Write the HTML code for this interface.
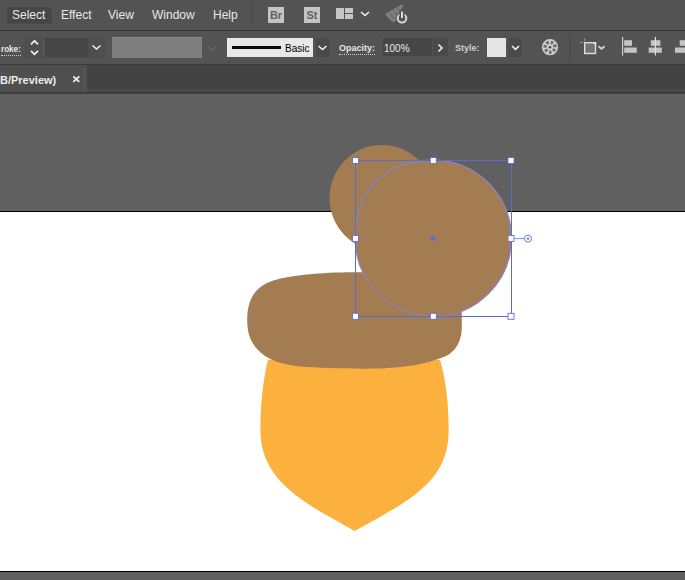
<!DOCTYPE html>
<html><head><meta charset="utf-8">
<style>
*{margin:0;padding:0;box-sizing:border-box}
html,body{width:685px;height:580px;overflow:hidden;background:#535353;font-family:"Liberation Sans",sans-serif}
.a{position:absolute}
#menubar{left:0;top:0;width:685px;height:30px;background:#535353}
#line1{left:0;top:30px;width:685px;height:1px;background:#333}
#ctrl{left:0;top:31px;width:685px;height:33px;background:#535353}
#tabbar{left:0;top:64px;width:685px;height:30px;background:#434343}
#paste{left:0;top:94px;width:685px;height:117px;background:#606060}
#art{left:0;top:211px;width:685px;height:361px;background:#fff;border-top:1px solid #000;border-bottom:1px solid #000}
#bottom{left:0;top:572px;width:685px;height:8px;background:#606060}
.m{color:#e8e8e8;font-size:12px;top:7px;line-height:16px;white-space:nowrap}
.lb{color:#e6e6e6;font-size:9px;font-weight:bold;line-height:12px;white-space:nowrap}
.tx{color:#e8e8e8;font-size:10px;line-height:12px;white-space:nowrap}
.dot{border-bottom:1px dotted #cfcfcf}
</style></head><body>
<div id="menubar" class="a"></div>
<div id="line1" class="a"></div>
<div id="ctrl" class="a"></div>
<div id="tabbar" class="a"></div>
<div id="paste" class="a"></div>
<div id="art" class="a"></div>
<div id="bottom" class="a"></div>

<!-- menu -->
<div class="a" style="left:7px;top:7px;width:45px;height:17px;background:#464646;border:1px solid #4b4b4b"></div>
<div class="a m" style="left:12px">Select</div>
<div class="a m" style="left:61px">Effect</div>
<div class="a m" style="left:108px">View</div>
<div class="a m" style="left:152px">Window</div>
<div class="a m" style="left:213px">Help</div>
<div class="a" style="left:251px;top:3px;width:2px;height:21px;background:#4d4d4d"></div>
<div class="a" style="left:268px;top:7px;width:16px;height:16px;background:#c4c4c4;color:#626262;font-size:11px;font-weight:bold;line-height:16px;text-align:center">Br</div>
<div class="a" style="left:304px;top:7px;width:16px;height:16px;background:#c4c4c4;color:#626262;font-size:11px;font-weight:bold;line-height:16px;text-align:center">St</div>
<div class="a" style="left:336px;top:8px;width:8px;height:11px;background:#c6c6c6"></div>
<div class="a" style="left:345px;top:8px;width:8px;height:5px;background:#c6c6c6"></div>
<div class="a" style="left:345px;top:14px;width:8px;height:5px;background:#c6c6c6"></div>
<svg class="a" style="left:0;top:0" width="685" height="30" viewBox="0 0 685 30">
  <polyline points="361,12 365,15.5 369,12" fill="none" stroke="#f0f0f0" stroke-width="1.6"/>
  <path d="M385.5 13.8 L395 8 L403 4.3 L403.5 5.5 L399.5 12 L395 22 L392 21.5 L386.5 16.2 Z" fill="#7e7e7e"/>
  <path d="M388.5 11.5 L393.5 18.5 M392.5 9.2 L397.5 15.5 M396.5 7 L400.5 11.5" stroke="#5e5e5e" stroke-width="0.9"/>
  <circle cx="402" cy="18.2" r="6.3" fill="#535353"/>
  <circle cx="402" cy="18.2" r="4.3" fill="none" stroke="#d6d6d6" stroke-width="2"/>
  <rect x="399.5" y="10.5" width="5" height="7" fill="#535353"/>
  <rect x="401" y="11.5" width="2" height="6.5" fill="#d6d6d6"/>
</svg>

<!-- control bar -->
<div class="a lb dot" style="left:1px;top:43px;font-size:8.3px;letter-spacing:-0.1px">roke:</div>
<div class="a" style="left:24px;top:37px;width:81px;height:21px;background:#4e4e4e"></div>
<div class="a" style="left:45px;top:38px;width:43px;height:19px;background:#454545"></div>
<div class="a" style="left:43px;top:38px;width:1px;height:19px;background:#5a5a5a"></div>

<div class="a" style="left:112px;top:37px;width:90px;height:21px;background:#7e7e7e;border-top:1px solid #898989"></div>
<div class="a" style="left:227px;top:38px;width:86px;height:19px;background:#e8e8e8"></div>
<div class="a" style="left:232px;top:46px;width:49px;height:3px;background:#0a0a0a"></div>
<div class="a" style="left:285px;top:43px;color:#000;font-size:10px;line-height:12px">Basic</div>
<div class="a" style="left:316px;top:38px;width:14px;height:19px;background:#4a4a4a"></div>
<div class="a lb dot" style="left:339px;top:42px">Opacity:</div>
<div class="a" style="left:383px;top:38px;width:49px;height:18px;background:#464646"></div>
<div class="a tx" style="left:384px;top:43px">100%</div>
<div class="a" style="left:433px;top:38px;width:15px;height:18px;background:#4a4a4a"></div>
<div class="a lb" style="left:455px;top:42px;color:#d0d0d0">Style:</div>
<div class="a" style="left:487px;top:38px;width:19px;height:19px;background:#e6e6e6"></div>
<div class="a" style="left:509px;top:38px;width:13px;height:19px;background:#4a4a4a"></div>
<svg class="a" style="left:0;top:31px" width="685" height="33" viewBox="0 31 685 33">
  <polyline points="31,44.3 34.5,40.8 38,44.3" fill="none" stroke="#eee" stroke-width="1.7"/>
  <polyline points="31,50.8 34.5,54.3 38,50.8" fill="none" stroke="#eee" stroke-width="1.7"/>
  <polyline points="92.5,45.5 96.5,49 100.5,45.5" fill="none" stroke="#f2f2f2" stroke-width="1.6"/>
  <polyline points="208,47 212,50 216,47" fill="none" stroke="#666" stroke-width="1.4"/>
  <polyline points="318.5,46 322.5,49.5 326.5,46" fill="none" stroke="#f2f2f2" stroke-width="1.6"/>
  <polyline points="438.5,44.5 442,48 438.5,51.5" fill="none" stroke="#f2f2f2" stroke-width="1.6"/>
  <polyline points="512,46 515.5,49.3 519,46" fill="none" stroke="#f2f2f2" stroke-width="1.6"/>
</svg>
<svg class="a" style="left:530px;top:31px" width="155" height="33" viewBox="530 31 155 33">
  <circle cx="550" cy="47.2" r="8.1" fill="#cfcfcf"/>
  <path d="M550.45 44.03L550.92 40.66A6.6 6.6 0 0 1 554.06 42.00L551.97 44.68A3.2 3.2 0 0 0 550.45 44.03ZM552.76 45.57L555.68 43.84A6.6 6.6 0 0 1 556.60 47.13L553.20 47.17A3.2 3.2 0 0 0 552.76 45.57ZM552.99 48.34L556.17 49.55A6.6 6.6 0 0 1 554.17 52.32L552.02 49.68A3.2 3.2 0 0 0 552.99 48.34ZM550.97 50.25L552.01 53.49A6.6 6.6 0 0 1 548.60 53.65L549.32 50.33A3.2 3.2 0 0 0 550.97 50.25ZM548.22 49.86L546.34 52.69A6.6 6.6 0 0 1 544.08 50.12L547.13 48.62A3.2 3.2 0 0 0 548.22 49.86ZM546.81 47.47L543.42 47.76A6.6 6.6 0 0 1 544.03 44.40L547.10 45.84A3.2 3.2 0 0 0 546.81 47.47ZM547.80 44.88L545.46 42.41A6.6 6.6 0 0 1 548.47 40.78L549.26 44.09A3.2 3.2 0 0 0 547.80 44.88Z" fill="#6c6c6c"/>
  <circle cx="550" cy="47.2" r="1.3" fill="#4a4a4a"/>
  <rect x="569" y="35" width="2" height="25" fill="#4b4b4b"/>
  <rect x="584.7" y="42.7" width="10.8" height="10.8" fill="#727272" stroke="#dedede" stroke-width="1.4"/>
  <path d="M592 42 L596.2 42 L596.2 46 Z" fill="#dedede"/>
  <line x1="580" y1="42.6" x2="583" y2="42.6" stroke="#9a9a9a" stroke-width="1"/>
  <line x1="584.6" y1="38.5" x2="584.6" y2="41" stroke="#9a9a9a" stroke-width="1"/>
  <polyline points="598.5,46.3 601.5,48.8 604.6,46.3" fill="none" stroke="#d0d0d0" stroke-width="1.8"/>
  <rect x="622" y="37" width="1.2" height="18.5" fill="#d0d0d0"/>
  <rect x="624.2" y="40.2" width="7.8" height="5.6" fill="#c4c4c4"/>
  <rect x="624.2" y="47.5" width="12.6" height="5.3" fill="#c4c4c4"/>
  <rect x="650.8" y="40.2" width="9.6" height="5.6" fill="#c4c4c4"/>
  <rect x="648.7" y="47.5" width="13.1" height="5.3" fill="#c4c4c4"/>
  <rect x="654.8" y="37" width="1.2" height="18.5" fill="#e0e0e0"/>
  <rect x="679.7" y="40.2" width="6" height="5.6" fill="#c4c4c4"/>
  <rect x="675" y="47.5" width="10" height="5.3" fill="#c4c4c4"/>
</svg>

<!-- tab -->
<div class="a" style="left:0;top:64px;width:685px;height:1px;background:#3c3c3c"></div>
<div class="a" style="left:87px;top:89px;width:598px;height:2px;background:#4a4a4a"></div>
<div class="a" style="left:0;top:92px;width:685px;height:2px;background:#3e3e3e"></div>
<div class="a" style="left:0;top:65px;width:87px;height:27px;background:#4f4f4f"></div>
<div class="a" style="left:83px;top:68px;width:2px;height:21px;background:#555"></div>
<div class="a" style="left:0;top:72px;color:#ececec;font-size:11px;font-weight:bold;line-height:16px;white-space:nowrap">B/Preview)</div>
<svg class="a" style="left:72px;top:75px" width="9" height="8" viewBox="0 0 9 8">
  <path d="M1.3 1.3 L7.3 6.8 M7.3 1.3 L1.3 6.8" stroke="#f0f0f0" stroke-width="1.8"/>
</svg>

<svg class="a" style="left:0;top:0" width="685" height="580" viewBox="0 0 685 580">
  <!-- body -->
  <path d="M268 359.8 C263 380 260.4 405 260.4 430 C260.4 484.6 311.3 505.7 354.5 531 C409.1 500.8 448.7 482.2 448.7 430 C448.7 405 446 380 440 359.8 Z" fill="#FCB03D"/>
  <!-- cap -->
  <path d="M247.2 320 C247.2 300 255 286 274 280.2 C290 275.5 320 272.2 353.7 272.2 L440 272 L461.8 290 L461.8 327 C461.8 345 452 355 441 358 C425 364 410 367 380 368.5 C350 369 320 368 300 366.5 C280 364.5 266 359 257 349 C250 341 247.2 332 247.2 320 Z" fill="#A47C51"/>
  <!-- small circle -->
  <ellipse cx="382" cy="198" rx="52.5" ry="53" fill="#A47C51"/>
  <!-- big circle -->
  <path d="M355.3 238.3 C355.3 189.9 384.9 160.3 433.3 160.3 C476.4 160.3 511.3 195.2 511.3 238.3 C511.3 281.4 476.4 316.3 433.3 316.3 C390.2 316.3 355.3 281.4 355.3 238.3 Z" fill="#A47C51" stroke="#8c82b4" stroke-width="1.5"/>
  <!-- bbox -->
  <rect x="355.5" y="160.5" width="156" height="156" fill="none" stroke="#5d6cc8" stroke-width="1"/>
  <g fill="#fff" stroke="#5b6fd6" stroke-width="0.9"><rect x="352.5" y="157.5" width="6" height="6"/><rect x="430.3" y="157.5" width="6" height="6"/><rect x="508.0" y="157.5" width="6" height="6"/><rect x="352.5" y="235.4" width="6" height="6"/><rect x="508.0" y="235.4" width="6" height="6"/><rect x="352.5" y="313.3" width="6" height="6"/><rect x="430.3" y="313.3" width="6" height="6"/><rect x="508.0" y="313.3" width="6" height="6"/></g>
  <line x1="514" y1="238.6" x2="524.5" y2="238.6" stroke="#7284dc" stroke-width="0.9"/>
  <circle cx="528" cy="238.7" r="3.5" fill="none" stroke="#6678d8" stroke-width="1"/>
  <circle cx="528" cy="238.7" r="1.1" fill="#5b6fd6"/>
  <circle cx="433" cy="238.3" r="2.5" fill="#5b6fd6"/>
</svg>
</body></html>
